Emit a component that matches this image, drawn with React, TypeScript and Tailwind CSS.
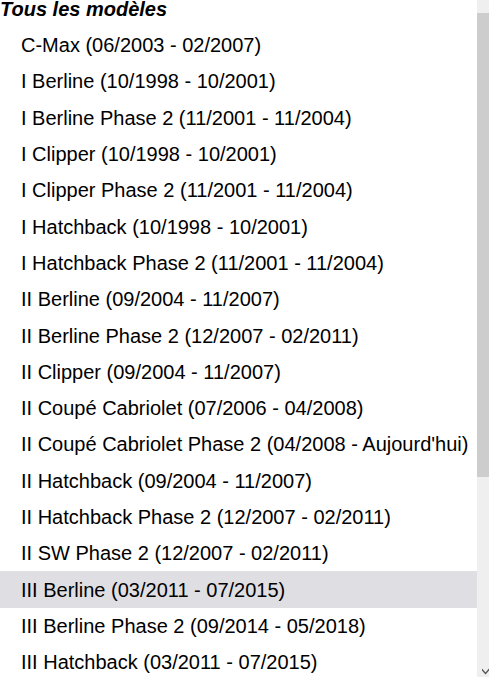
const models = [
  'C-Max (06/2003 - 02/2007)',
  'I Berline (10/1998 - 10/2001)',
  'I Berline Phase 2 (11/2001 - 11/2004)',
  'I Clipper (10/1998 - 10/2001)',
  'I Clipper Phase 2 (11/2001 - 11/2004)',
  'I Hatchback (10/1998 - 10/2001)',
  'I Hatchback Phase 2 (11/2001 - 11/2004)',
  'II Berline (09/2004 - 11/2007)',
  'II Berline Phase 2 (12/2007 - 02/2011)',
  'II Clipper (09/2004 - 11/2007)',
  'II Coupé Cabriolet (07/2006 - 04/2008)',
  "II Coupé Cabriolet Phase 2 (04/2008 - Aujourd'hui)",
  'II Hatchback (09/2004 - 11/2007)',
  'II Hatchback Phase 2 (12/2007 - 02/2011)',
  'II SW Phase 2 (12/2007 - 02/2011)',
  'III Berline (03/2011 - 07/2015)',
  'III Berline Phase 2 (09/2014 - 05/2018)',
  'III Hatchback (03/2011 - 07/2015)',
];

const App = () => {
  const selected = 'III Berline (03/2011 - 07/2015)';

  return (
    <div className="flex h-[677px] w-[489px] overflow-hidden bg-white text-[20px] text-black font-['Liberation_Sans',Arial,sans-serif]">
      <div className="flex-1 overflow-hidden">
        <div className="-mt-[9px]">
          <div className="flex h-[36px] items-center font-bold italic leading-none">Tous les modèles</div>
          {models.map((m) => (
            <div
              key={m}
              className={`flex h-[36.3px] items-center whitespace-nowrap pl-[21px] leading-none ${
                m === selected ? 'bg-[#dfdee3]' : ''
              }`}
            >
              {m}
            </div>
          ))}
        </div>
      </div>

      <div className="relative flex w-[12px] flex-col bg-[#efefef]">
        <div className="h-[13px]" />
        <div className="h-[464px] bg-[#cdcdcd]" />
        <svg className="absolute left-[5px] top-[667px] h-[8px] w-[8px]" viewBox="0 0 8 8">
          <path d="M0 1.5 L3.5 5.5 L7 1.5 L7 3.5 L3.5 7.5 L0 3.5 Z" fill="#505050" />
        </svg>
      </div>
    </div>
  );
};

export default App;
